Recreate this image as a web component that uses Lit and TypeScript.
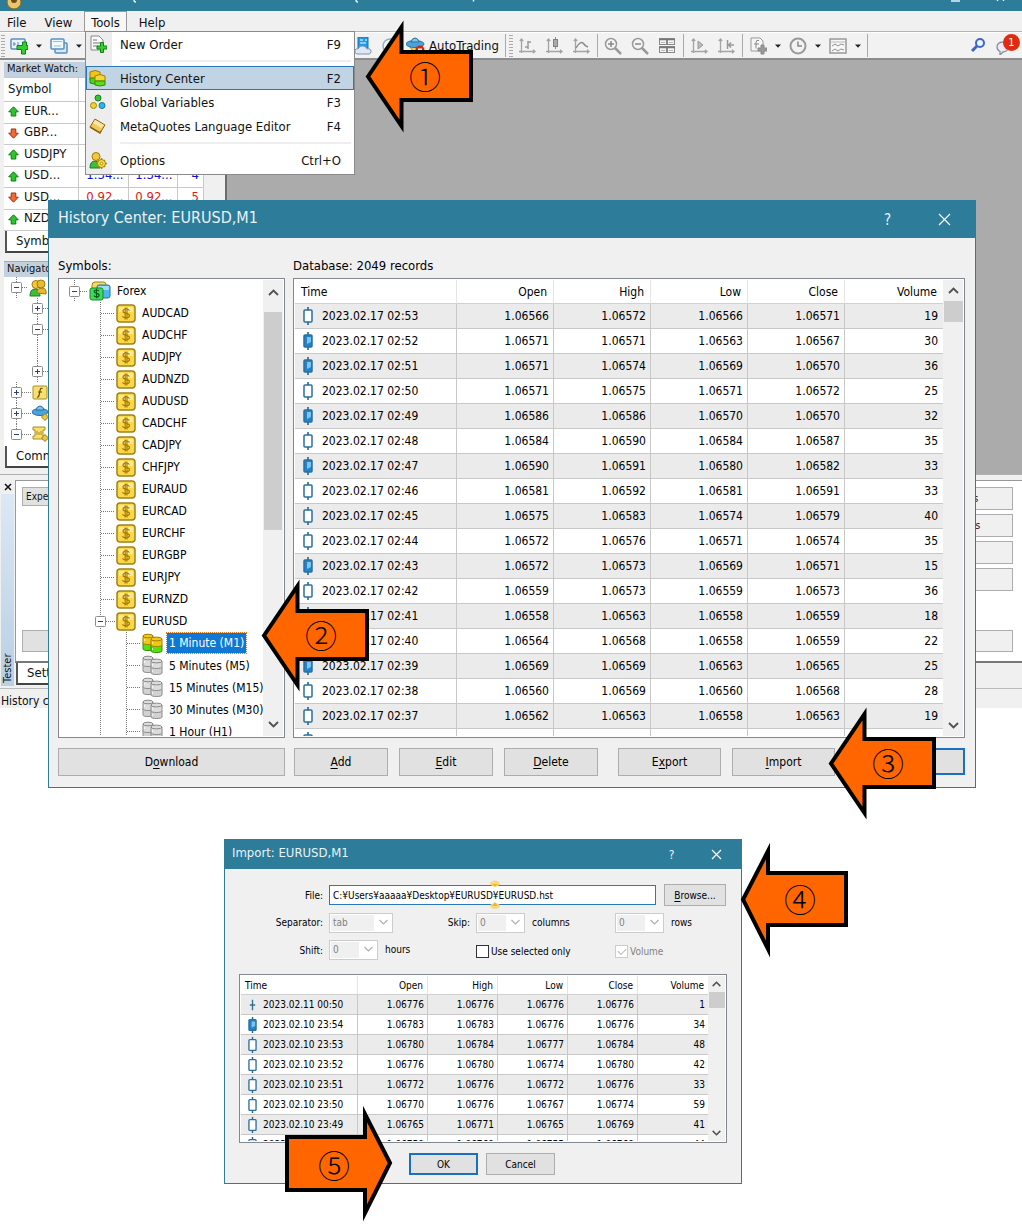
import { LitElement, html, svg, css, nothing } from "lit";
import { customElement, property } from "lit/decorators.js";
import { classMap } from "lit/directives/class-map.js";

type Bar = { time: string; kind: "up" | "down" | "flat"; cells: string[] };

const bar = (time: string, kind: Bar["kind"], values: string): Bar => ({ time, kind, cells: values.split(" ") });

const HISTORY: Bar[] = [
  bar("2023.02.17 02:53", "up", "1.06566 1.06572 1.06566 1.06571 19"),
  bar("2023.02.17 02:52", "down", "1.06571 1.06571 1.06563 1.06567 30"),
  bar("2023.02.17 02:51", "down", "1.06571 1.06574 1.06569 1.06570 36"),
  bar("2023.02.17 02:50", "up", "1.06571 1.06575 1.06571 1.06572 25"),
  bar("2023.02.17 02:49", "down", "1.06586 1.06586 1.06570 1.06570 32"),
  bar("2023.02.17 02:48", "up", "1.06584 1.06590 1.06584 1.06587 35"),
  bar("2023.02.17 02:47", "down", "1.06590 1.06591 1.06580 1.06582 33"),
  bar("2023.02.17 02:46", "up", "1.06581 1.06592 1.06581 1.06591 33"),
  bar("2023.02.17 02:45", "up", "1.06575 1.06583 1.06574 1.06579 40"),
  bar("2023.02.17 02:44", "up", "1.06572 1.06576 1.06571 1.06574 35"),
  bar("2023.02.17 02:43", "down", "1.06572 1.06573 1.06569 1.06571 15"),
  bar("2023.02.17 02:42", "up", "1.06559 1.06573 1.06559 1.06573 36"),
  bar("2023.02.17 02:41", "up", "1.06558 1.06563 1.06558 1.06559 18"),
  bar("2023.02.17 02:40", "down", "1.06564 1.06568 1.06558 1.06559 22"),
  bar("2023.02.17 02:39", "down", "1.06569 1.06569 1.06563 1.06565 25"),
  bar("2023.02.17 02:38", "up", "1.06560 1.06569 1.06560 1.06568 28"),
  bar("2023.02.17 02:37", "up", "1.06562 1.06563 1.06558 1.06563 19"),
  bar("", "up", "    "),
];

const PREVIEW: Bar[] = [
  bar("2023.02.11 00:50", "flat", "1.06776 1.06776 1.06776 1.06776 1"),
  bar("2023.02.10 23:54", "down", "1.06783 1.06783 1.06776 1.06776 34"),
  bar("2023.02.10 23:53", "up", "1.06780 1.06784 1.06777 1.06784 48"),
  bar("2023.02.10 23:52", "up", "1.06776 1.06780 1.06774 1.06780 42"),
  bar("2023.02.10 23:51", "up", "1.06772 1.06776 1.06772 1.06776 33"),
  bar("2023.02.10 23:50", "up", "1.06770 1.06776 1.06767 1.06774 59"),
  bar("2023.02.10 23:49", "up", "1.06765 1.06771 1.06765 1.06769 41"),
  bar("2023.02.10 23:48", "up", "1.06759 1.06769 1.06755 1.06769 44"),
];

const SYMBOLS = [
  "AUDCAD", "AUDCHF", "AUDJPY", "AUDNZD", "AUDUSD", "CADCHF", "CADJPY", "CHFJPY",
  "EURAUD", "EURCAD", "EURCHF", "EURGBP", "EURJPY", "EURNZD", "EURUSD",
];
const FRAMES = ["1 Minute (M1)", "5 Minutes (M5)", "15 Minutes (M15)", "30 Minutes (M30)", "1 Hour (H1)"];

const icon = (w: number, h: number, body: unknown) =>
  html`<svg width=${w} height=${h} viewBox="0 0 ${w} ${h}" aria-hidden="true">${body}</svg>`;

const cylinders = (top: string, topEdge: string, low: string, lowEdge: string) =>
  icon(21, 20, svg`
    <g stroke-width="1">
      <path d="M1 9v7c0 2 10 2 10 0V9z" fill=${low} stroke=${lowEdge}/>
      <path d="M1 3v7c0 2 10 2 10 0V3z" fill=${top} stroke=${topEdge}/>
      <ellipse cx="6" cy="3" rx="5" ry="1.8" fill=${top} stroke=${topEdge}/>
      <path d="M9 12v6c0 2 11 2 11 0v-6z" fill=${low} stroke=${lowEdge}/>
      <path d="M9 6v6c0 2 11 2 11 0V6z" fill=${top} stroke=${topEdge}/>
      <ellipse cx="14.500" cy="6" rx="5.500" ry="1.900" fill=${top} stroke=${topEdge}/>
      <path d="M10.500 9v2M10.500 15v2M2.500 6v2" stroke="#fff" opacity=".7"/>
    </g>`);
const goldCylinders = () => cylinders("#f2c811", "#a57c00", "#55e010", "#2b9000");
const grayCylinders = () => cylinders("#dcdcdc", "#8a8a8a", "#d2d2d2", "#8a8a8a");

const dollar = () => icon(20, 19, svg`
  <rect x="1" y="1" width="18" height="17" rx="3" fill="#fbd84a" stroke="#a08218" stroke-width="1.500"/>
  <path d="M3 4q0-1 1-1h12q1 0 1 1v4H3z" fill="#fdea92"/>
  <path d="M13.500 6.500q-1-1.300-3.500-1.300-3 0-3 2 0 1.700 3 2.100 3.500.5 3.500 2.300 0 2.200-3.500 2.200-2.600 0-3.600-1.500M9.200 3.500v12M11 3.500v12" fill="none" stroke="#a87c08" stroke-width="1.200"/>`);

const forexIcon = () => icon(22, 20, svg`
  <path d="M3 4q0-3 3-3h9q2 0 2 3v8H3z" fill="#f8dc58" stroke="#a08218"/>
  <rect x="8" y="4" width="13" height="13" rx="2" fill="#52b4ec" stroke="#2377a8"/>
  <rect x="9" y="5" width="11" height="4" fill="#9fdcf8"/>
  <rect x="1" y="7" width="13" height="12" rx="2" fill="#3fdc5c" stroke="#138a2b"/>
  <path d="M10 10q-.8-1-2.600-1-2.200 0-2.200 1.600 0 1.400 2.300 1.800 2.600.4 2.600 1.800 0 1.700-2.600 1.700-1.900 0-2.700-1.200M7.500 7.800v9.400" fill="none" stroke="#0a5c1c" stroke-width="1.200"/>`);

const candle = (kind: Bar["kind"]) =>
  kind === "flat"
    ? icon(12, 18, svg`<path d="M6 3v12M3 9h6" stroke="#2f6f93" stroke-width="1.500"/>`)
    : icon(12, 18, svg`
      <path d="M6 0v18" stroke="#1f6796" stroke-width="1.600"/>
      <rect x="2" y="3" width="8" height="12" rx="1" fill=${kind === "down" ? "#2283cc" : "#fff"} stroke="#2b6f9a" stroke-width="1.500"/>
      ${kind === "down" ? svg`<path d="M5 5h4v5l-4 2z" fill="#7cc4f0"/>` : nothing}`);

const chevron = (dir: "up" | "down") => icon(13, 9, svg`
  <path d=${dir === "up" ? "M2 7l4.500-4.500L11 7" : "M2 2l4.500 4.500L11 2"} fill="none" stroke="#505050" stroke-width="1.800"/>`);

const closeGlyph = (s: number) => icon(s, s, svg`<path d="M1 1L${s - 1} ${s - 1}M${s - 1} 1L1 ${s - 1}" stroke="#fff" stroke-width="1.200"/>`);

const arrowMark = (up: boolean) => icon(11, 11, svg`
  <path d=${up ? "M5.500 .8L10.300 5.800H7.800V10H3.200V5.800H.7z" : "M5.500 10.200L.7 5.200H3.200V1H7.800V5.200H10.300z"}
    fill=${up ? "#2fc22f" : "#ee6a38"} stroke=${up ? "#107a10" : "#a8300c"}/>`);

const guide = (w: number, opts: { v?: boolean; h?: boolean; box?: string; half?: boolean }, H = 22) => {
  const m = Math.floor(H / 2);
  return icon(w, H, svg`
    ${opts.v ? svg`<path d="M${opts.box ? 6.5 : 0.5} 0V${opts.half ? m : H}" stroke="#777" stroke-dasharray="1 1"/>` : nothing}
    ${opts.h ? svg`<path d="M${opts.box ? 12 : 1} ${m + 0.5}H${w - 1}" stroke="#777" stroke-dasharray="1 1"/>` : nothing}
    ${opts.box ? svg`
      <rect x="1.500" y=${m - 4.5} width="10" height="10" rx="1" fill="#fff" stroke="#8c8c8c"/>
      <path d="M4 ${m + 0.5}h5${opts.box === "+" ? `M6.500 ${m - 2}v5` : ""}" stroke="#2c3f78"/>` : nothing}`);
};

const BASE = css`
  * { box-sizing: border-box; }
  svg { display: block; flex: none; }
  button { font: inherit; color: inherit; margin: 0; padding: 0; }
  u { text-underline-offset: 2px; }
`;

@customElement("bar-table")
export class BarTable extends LitElement {
  static styles = [BASE, css`
    :host { display: flex; min-width: 0; background: #fff; border: 1px solid #828790; padding: 1px; overflow: hidden; font-size: 12px; }
    .view { flex: 1; min-width: 0; overflow: hidden; }
    table { width: 100%; table-layout: fixed; border-collapse: separate; border-spacing: 0; }
    .time { width: 162px; }
    .price { width: 97px; }
    th { height: 24px; padding: 0 6px; font-weight: 400; text-align: right; border-right: 1px solid #e4e4e4; border-bottom: 1px solid #d0d0d0; }
    th:first-child { text-align: left; }
    td { height: 25px; padding: 0 4px; text-align: right; border-right: 1px solid #c8c8c8; border-bottom: 1px solid #c8c8c8; white-space: nowrap; line-height: 18px; }
    td:last-child { padding-right: 5px; border-right: 0; }
    th:last-child { border-right: 0; }
    tbody tr:nth-child(odd) { background: #ebebeb; }
    .stamp { display: flex; align-items: center; gap: 8px; padding-left: 3px; height: 18px; }
    .scroll { flex: none; width: 20px; background: #f0f0f0; display: flex; flex-direction: column; align-items: center; }
    .end { height: 21px; display: grid; place-items: center; }
    .thumb { width: 19px; height: 21px; background: #cdcdcd; }
    .rest { flex: 1; }
    :host([compact]) { font-size: 10px; }
    :host([compact]) .time { width: 117px; }
    :host([compact]) .price { width: 70px; }
    :host([compact]) th { height: 19px; padding: 0 4px; }
    :host([compact]) td { height: 20px; padding: 0 3px; }
    :host([compact]) .stamp { gap: 5px; }
    :host([compact]) .stamp svg { width: 11px; height: 16px; }
    :host([compact]) .scroll { width: 17px; }
    :host([compact]) .end { height: 16px; }
    :host([compact]) .end svg { width: 11px; height: 8px; }
    :host([compact]) .thumb { width: 16px; height: 16px; }
  `];
  @property({ attribute: false }) rows: Bar[] = [];
  render() {
    return html`
      <div class="view">
        <table>
          <colgroup><col class="time"><col class="price"><col class="price"><col class="price"><col class="price"><col></colgroup>
          <thead><tr>${["Time", "Open", "High", "Low", "Close", "Volume"].map((h) => html`<th scope="col">${h}</th>`)}</tr></thead>
          <tbody>
            ${this.rows.map((r) => html`<tr>
              <td><div class="stamp">${candle(r.kind)}<span>${r.time}</span></div></td>
              ${r.cells.map((c) => html`<td>${c}</td>`)}
            </tr>`)}
          </tbody>
        </table>
      </div>
      <div class="scroll">
        <div class="end">${chevron("up")}</div><div class="thumb"></div><div class="rest"></div><div class="end">${chevron("down")}</div>
      </div>`;
  }
}

@customElement("step-arrow")
export class StepArrow extends LitElement {
  static styles = [BASE, css`
    :host { display: grid; width: 108px; }
    svg, .num { grid-area: 1 / 1; }
    .num { place-self: center; padding: 0 0 4px 12px; font: 300 32px/40px "Noto Sans CJK JP", sans-serif; color: #000; }
    :host([shape="right"]) .num { padding: 0 10px 0 0; }
  `];
  @property({ reflect: true }) shape = "left";
  @property() label = "";
  render() {
    const shapes: Record<string, [number, string]> = {
      left: [114, "3,56.5 36.5,7 36.5,32 106,32 106,80 36.5,80 36.5,106"],
      wide: [116, "3,57.5 28,9 28,31 106,31 106,83 28,83 28,107"],
      right: [119, "105,59 80,10 80,33 2,33 2,86 80,86 80,109"],
    };
    const [h, pts] = shapes[this.shape];
    return html`${icon(108, h, svg`<polygon points=${pts} fill="#ff6600" stroke="#000" stroke-width="4" stroke-miterlimit="8"/>`)}
      <span class="num">${this.label}</span>`;
  }
}

@customElement("trading-window")
export class TradingWindow extends LitElement {
  static styles = [BASE, css`
    :host { display: flex; flex-direction: column; background: #f0f0f0; font-size: 13px; position: relative; }
    .title { height: 11px; background: #2d7c99; overflow: hidden; }
    .title svg { width: 100%; }
    .menubar { display: flex; height: 21px; border-bottom: 1px solid #b4b4b4; }
    .menubar button { border: 1px solid transparent; border-bottom: 0; background: none; padding: 0 7px 0 6px; height: 21px; line-height: 17px; margin-right: 3px; }
    .menubar .open { background: #f7f7f7; border-color: #9a9a9a; padding: 0 6px; }
    .menubar .help { margin-left: 2px; }
    .menubar .view { margin-right: 4px; }
    .tools { display: flex; align-items: center; height: 28px; border-top: 1px solid #fff; border-bottom: 2px solid #8c8c8c; background: #f2f2f2; }
    .tool { border: 0; background: none; width: 27px; height: 24px; display: flex; justify-content: center; align-items: center; flex: none; }
    .mid { width: 26px; }
    .drop { width: 14px; }
    .auto { width: auto; gap: 4px; padding: 0 4px 0 3px; white-space: nowrap; }
    .grip { width: 4px; height: 22px; margin: 0 1px; flex: none; background: repeating-linear-gradient(#aaa 0 1px, transparent 1px 3px); }
    .sep { width: 5px; flex: none; height: 23px; background: linear-gradient(#aaa, #aaa) 2px 0 / 1px 100% no-repeat; }
    .covered { width: 263px; flex: none; }
    .grow { flex: 1; }
    .alerts { width: 31px; position: relative; justify-content: flex-start; }
    .badge { position: absolute; right: 2px; top: 0; width: 17px; height: 17px; border-radius: 9px; background: #dd2c12; color: #fff; font-size: 11px; line-height: 17px; }
    .work { display: flex; }
    .side { width: 227px; flex: none; border-right: 2px solid #6c6c6c; padding: 2px 3px 6px 4px; }
    .space { flex: 1; background: #ababab; }
    .cap { height: 15px; background: #c3d0de; font-size: 11px; line-height: 14px; padding-left: 3px; white-space: nowrap; overflow: hidden; }
    .quotes { width: 200px; height: 154px; border-collapse: collapse; table-layout: fixed; background: #fff; line-height: 15px; }
    .quotes th { text-align: left; font-weight: 400; height: 24px; padding: 0 4px 3px; border: 1px solid #c9c9c9; border-left: 0; }
    .quotes td { padding: 0 4px 4px; border: 1px solid #c9c9c9; border-left: 0; text-align: right; white-space: nowrap; overflow: hidden; }
    .quotes tr td:first-child { text-align: left; }
    .name { display: flex; align-items: center; gap: 5px; }
    .name svg { margin-top: 3px; }
    .c1 { width: 74px; } .c2 { width: 50px; } .c3 { width: 49px; }
    .bid { color: #1010d8; } .ask { color: #e01818; }
    .tab { height: 22px; margin-left: 1px; padding-left: 9px; border-left: 2px solid #555; border-bottom: 2px solid #444; background: #fff; line-height: 20px; width: 80px; }
    .cap.second { margin-top: 8px; border-top: 1px solid #aaa; height: 16px; }
    .nav { background: #fff; display: flex; flex-direction: column; height: 169px; overflow: hidden; }
    .row { display: flex; align-items: center; height: 21px; padding-left: 6px; }
    .sub { padding-left: 27px; }
    .deep { padding-left: 33px; }
    .tester { display: flex; border-top: 1px solid #b0b0b0; height: 214px; padding-top: 5px; }
    .strip { width: 15px; flex: none; display: flex; flex-direction: column; align-items: center; font-size: 11px; }
    .strip button { border: 0; background: none; height: 14px; line-height: 12px; }
    .vert { flex: 1; width: 13px; background: linear-gradient(#b9cfe4, #dbe8f6); writing-mode: vertical-rl; transform: rotate(180deg); line-height: 13px; padding-top: 3px; font-size: 11px; margin-bottom: 2px; }
    .panel { flex: 1; display: flex; flex-direction: column; min-width: 0; }
    .fields { display: flex; justify-content: space-between; height: 183px; border-top: 1px solid #999; border-left: 1px solid #999; border-bottom: 2px solid #777; background: #fff; padding: 6px 9px 9px 6px; font-size: 10px; }
    .col { display: flex; flex-direction: column; gap: 4px; width: 144px; }
    .col button { border: 1px solid #adadad; background: #f0f0f0; height: 23px; flex: none; padding-right: 4px; }
    .col .last { margin-top: auto; height: 22px; }
    .left button { text-align: left; padding-left: 3px; height: 19px; background: #e1e1e1; }
    .status { height: 20px; border-top: 1px solid #bbb; padding-left: 1px; line-height: 24px; font-size: 12px; overflow: hidden; }
    .menu { position: absolute; left: 85px; top: 31px; width: 270px; border: 1px solid #8a8a8a; background: linear-gradient(90deg, #ededed 26px, #fff 26px); padding-bottom: 2px; }
    .item { display: flex; align-items: center; width: 100%; height: 24px; border: 1px solid transparent; background: none; padding: 0 12px 0 2px; text-align: left; }
    .item.hot { background: #c1d4e4; border-color: #2a78b8; }
    .glyph { width: 31px; }
    .item .txt { flex: 1; }
    hr { margin: 4px 3px 4px 34px; border: 0; height: 2px; background: #eee; }
  `];

  private item(text: string, key: string, glyph: unknown, hot = false) {
    return html`<button class=${classMap({ item: true, hot })}><span class="glyph">${glyph}</span><span class="txt">${text}</span><span>${key}</span></button>`;
  }
  private tool(label: string, body: unknown, cls = "") {
    return html`<button class="tool ${cls}" aria-label=${label}>${icon(18, 18, body)}</button>`;
  }
  private drop(label: string) {
    return html`<button class="tool drop" aria-label=${label}>${icon(6, 4, svg`<path d="M0 .5h6L3 3.800z" fill="#222"/>`)}</button>`;
  }

  render() {
    const axes = svg`<path d="M3.500 2v14M1 14.500h16M1.800 4l1.700-2 1.700 2M15 12.800l2 1.700-2 1.700" fill="none" stroke="#a4a4a4" stroke-width="1.300"/>`;
    const person = svg`<path d="M1 17q0-7 5-7t5 7z" fill="#3bbf3b" stroke="#1d7a1d"/><circle cx="7" cy="5.500" r="4" fill="#f3c93b" stroke="#a07810"/>`;
    const quotes: [boolean, string, string, string, string][] = [
      [true, "EUR...", "", "", ""], [false, "GBP...", "", "", ""], [true, "USDJPY", "", "", ""],
      [true, "USD...", "1.34...", "4", "bid"], [false, "USD...", "0.92...", "5", "ask"], [true, "NZD...", "", "", ""],
    ];
    return html`
      <div class="title"><svg width="100%" height="11">
        <circle cx="14" cy="2" r="7" fill="#e8c56a" stroke="#8a6416"/><circle cx="14" cy="0" r="3" fill="#6b4a18"/>
        <path d="M134 0q0 2 2 2M356 0q0 2 2 2M473.500 0v1.500M951 1h9M997.500 0v1M1003.500 0v1" fill="none" stroke="#e6f1f5" stroke-width="1.500"/>
      </svg></div>
      <nav class="menubar"><button>File</button><button class="view">View</button><button class="open">Tools</button><button class="help">Help</button></nav>
      <div class="tools">
        <span class="grip"></span>
        ${this.tool("New chart", svg`<rect x="1" y="2" width="14" height="10" rx="1" fill="#eaf4fc" stroke="#5b8fbd" stroke-width="1.500"/><path d="M4 5v4M3 7h3M8 5v3" stroke="#5b8fbd"/><path d="M9 8.500h3.500V5h4v3.500H18v4h-2.500V17h-4v-4.500H7v-4z" fill="#35cc35" stroke="#128012"/>`, "mid")}
        ${this.drop("New chart list")}
        ${this.tool("Profiles", svg`<rect x="5" y="6" width="12" height="10" rx="1" fill="#d5e8f8" stroke="#5b8fbd" stroke-width="1.500"/><rect x="1" y="2" width="13" height="10" rx="1" fill="#f1f8fd" stroke="#5b8fbd" stroke-width="1.500"/><path d="M3 4.500h9M4 9h7" stroke="#9dbfdd"/>`, "mid")}
        ${this.drop("Profile list")}
        <span class="covered"></span>
        ${this.tool("Virtual hosting", svg`<rect x="4" y="0" width="10" height="11" fill="#1f9be8" stroke="#1672b5"/><path d="M6 3h3M11 3h2M6 6h6" stroke="#fff"/><path d="M3 17q-3-1-2-4 1-2 3-1 2-4 5-3 3 0 4 3 4-1 4 2.500 0 2-2 2.500z" fill="#dfe7f2" stroke="#7d93ad"/>`)}
        ${this.tool("Signals", svg`<circle cx="9" cy="9" r="7" fill="none" stroke="#8fb0c8" stroke-width="1.500"/><circle cx="9" cy="9" r="3" fill="#6aa6cf"/>`)}
        <button class="tool auto">${icon(19, 18, svg`<path d="M3 9l6 7 8-2-1-6z" fill="#f4cf45" stroke="#a88416"/><ellipse cx="9" cy="7" rx="9" ry="3.500" fill="#4aa3dc" stroke="#2a6f9e"/><path d="M5 5q1-4 4-4t4 4z" fill="#7cc6ee" stroke="#2a6f9e"/><circle cx="14" cy="13" r="4.500" fill="#d8260e"/><rect x="12" y="11.500" width="4" height="3" fill="#fff"/>`)}<span>AutoTrading</span></button>
        <span class="sep"></span><span class="grip"></span>
        ${this.tool("Bar chart", svg`${axes}<path d="M10 4v8M10 5h3M7 10h3" stroke="#9a9a9a" stroke-width="1.500"/>`)}
        ${this.tool("Candlesticks", svg`${axes}<path d="M10.500 0v12" stroke="#8a8a8a"/><rect x="8.500" y="2.500" width="4" height="7" fill="#aaa" stroke="#808080"/>`)}
        ${this.tool("Line chart", svg`${axes}<path d="M4 11q4-7 7-5 2 3 5 4" fill="none" stroke="#8a8a8a" stroke-width="1.500"/>`)}
        <span class="sep"></span>
        ${this.tool("Zoom in", svg`<circle cx="7" cy="7" r="5.500" fill="#f4f4f4" stroke="#999" stroke-width="1.500"/><path d="M4 7h6M7 4v6" stroke="#888" stroke-width="1.500"/><path d="M11 11l6 6" stroke="#999" stroke-width="2.500"/>`)}
        ${this.tool("Zoom out", svg`<circle cx="7" cy="7" r="5.500" fill="#f4f4f4" stroke="#999" stroke-width="1.500"/><path d="M4 7h6" stroke="#888" stroke-width="1.500"/><path d="M11 11l6 6" stroke="#999" stroke-width="2.500"/>`)}
        ${this.tool("Tile windows", svg`<g fill="#f4f4f4" stroke="#888"><rect x="1.500" y="1.500" width="7" height="6"/><rect x="9.500" y="1.500" width="7" height="6"/><rect x="1.500" y="9.500" width="7" height="6"/><rect x="9.500" y="9.500" width="7" height="6"/></g><path d="M1 2.500h16M1 10.500h16" stroke="#777" stroke-width="1.500"/><path d="M3 5.500h4M11 5.500h4M3 13.500h4M11 13.500h4" stroke="#bbb"/>`)}
        <span class="sep"></span>
        ${this.tool("Auto scroll", svg`${axes}<path d="M8 4l5 4-5 4z" fill="#bbb" stroke="#999"/>`)}
        ${this.tool("Chart shift", svg`${axes}<path d="M10.500 3v9M17 8h-5M14 5.500L11.500 8 14 10.500" fill="none" stroke="#999" stroke-width="1.500"/>`)}
        <span class="sep"></span>
        ${this.tool("Indicators", svg`<path d="M2 1h9l3 3v10H2z" fill="#f6f6f6" stroke="#999"/><path d="M10 3.500q-3-1-3 2v6M5 7h5" fill="none" stroke="#888"/><path d="M9 11h3V8h3v3h3v3h-3v3h-3v-3H9z" fill="#9a9a9a" stroke="#888"/>`, "mid")}
        ${this.drop("Indicator list")}
        ${this.tool("Periods", svg`<circle cx="9" cy="9" r="7.500" fill="#f2f2f2" stroke="#999" stroke-width="2"/><path d="M9 4.500V9h4" fill="none" stroke="#888" stroke-width="1.500"/>`, "mid")}
        ${this.drop("Period list")}
        ${this.tool("Templates", svg`<rect x="1" y="2" width="16" height="14" fill="#f7f7f7" stroke="#999" stroke-width="1.500"/><path d="M2 5h14" stroke="#bbb"/><path d="M3 9l3-2 3 2 3-2 3 1M3 14l3-2 3 2 3-2 3 1" fill="none" stroke="#909090"/>`, "mid")}
        ${this.drop("Template list")}
        <span class="sep"></span><span class="grow"></span>
        ${this.tool("Search", svg`<circle cx="11" cy="6" r="4" fill="#eef3fb" stroke="#3f66c4" stroke-width="2"/><path d="M8 9l-5 5" stroke="#3f66c4" stroke-width="3"/>`)}
        <button class="tool alerts" aria-label="Notifications">${icon(18, 18, svg`<path d="M6 10q0-5 7-5t5 5-6 5l-3 3v-3.500Q6 13 6 10z" fill="#eceaf3" stroke="#8f8f9f" stroke-width="1.300"/>`)}<span class="badge">1</span></button>
      </div>
      <div class="work">
        <aside class="side">
          <div class="cap">Market Watch:</div>
          <table class="quotes">
            <colgroup><col class="c1"><col class="c2"><col class="c3"><col></colgroup>
            <thead><tr><th scope="col">Symbol</th><th></th><th></th><th></th></tr></thead>
            <tbody>${quotes.map(([up, name, price, spread, tone]) => html`<tr>
              <td><span class="name">${arrowMark(up)}${name}</span></td>
              <td class=${tone}>${price}</td><td class=${tone}>${price}</td><td class=${tone}>${spread}</td></tr>`)}</tbody>
          </table>
          <div class="tab">Symbols</div>
          <div class="cap second">Navigator</div>
          <div class="nav">
            <div class="row">${guide(19, { v: true, h: true, box: "-" }, 21)}${icon(18, 18, svg`${person}<path d="M8 14q0-5 5-5t4 6z" fill="#e5b92c" stroke="#a07810"/><circle cx="12" cy="5" r="4" fill="#e8bb35" stroke="#a07810"/>`)}</div>
            <div class="row sub">${guide(19, { v: true, h: true, box: "+" }, 21)}</div>
            <div class="row sub">${guide(19, { v: true, h: true, box: "-" }, 21)}</div>
            <div class="row deep">${guide(19, { v: true }, 21)}</div>
            <div class="row sub">${guide(19, { v: true, h: true, box: "+" }, 21)}</div>
            <div class="row">${guide(22, { v: true, h: true, box: "+" }, 21)}${icon(16, 16, svg`<rect x="1" y="1" width="14" height="13" rx="1" fill="#f9df6c" stroke="#a88c28"/><path d="M10.500 3.500q-2-1-2.500 2l-1 5q-.5 2-2 1.500M6 7h4" fill="none" stroke="#5c4c10" stroke-width="1.200"/>`)}</div>
            <div class="row">${guide(22, { v: true, h: true, box: "+" }, 21)}${icon(18, 17, svg`<ellipse cx="8" cy="7" rx="8" ry="3.500" fill="#4aa3dc" stroke="#2a6f9e"/><path d="M4 5q1-4 4-4t4 4z" fill="#7cc6ee" stroke="#2a6f9e"/><path d="M13 8.500l3.500 3.500-3.500 3.500L9.500 12z" fill="#f0c63c" stroke="#9a7a18"/>`)}</div>
            <div class="row">${guide(22, { v: true, h: true, box: "-" , half: true }, 21)}${icon(18, 17, svg`<path d="M1 1h12v3h-2v6h2v3H1v-3h2V4H1z" fill="#f9df6c" stroke="#a88c28"/><path d="M5 5v4M7 6v3M9 5v4" stroke="#a88c28"/><path d="M13 8.500l3.500 3.500-3.500 3.500L9.500 12z" fill="#f0c63c" stroke="#9a7a18"/>`)}</div>
          </div>
          <div class="tab">Common</div>
        </aside>
        <div class="space"></div>
      </div>
      <div class="tester">
        <div class="strip"><button aria-label="Close tester">${icon(8, 8, svg`<path d="M1 1l6 6M7 1L1 7" stroke="#111" stroke-width="1.500"/>`)}</button><div class="vert">Tester</div></div>
        <div class="panel">
          <div class="fields">
            <div class="col left"><button>Expert Advisor</button><button class="last" aria-label="Tester mode"></button></div>
            <div class="col"><button>Expert properties</button><button>Symbol properties</button><button aria-label="Chart"></button><button aria-label="Modify"></button><button class="last" aria-label="Run"></button></div>
          </div>
          <div class="tab">Settings</div>
        </div>
      </div>
      <div class="status">History center</div>
      <div class="menu">
        ${this.item("New Order", "F9", icon(18, 18, svg`<path d="M2 1h8l4 4v10H2z" fill="#fafafa" stroke="#8a8a8a"/><path d="M4 5h4M4 8h7M4 11h5" stroke="#777"/><path d="M8 11h3.500V7.500h3V11H18v3h-3.500v3.500h-3V14H8z" fill="#35cc35" stroke="#128012"/>`))}
        <hr>
        ${this.item("History Center", "F2", icon(18, 18, svg`<path d="M1 3q5-3 10 0v8H1z" fill="#f0c419" stroke="#a57c00"/><path d="M1 9h9v5q-5 2-9 0z" fill="#4fd31a" stroke="#2b9000"/><path d="M6 7q5-3 10 0v5H6z" fill="#f7d535" stroke="#a57c00"/><path d="M6 12h10v4q-5 2-10 0z" fill="#58dd1d" stroke="#2b9000"/>`), true)}
        ${this.item("Global Variables", "F3", icon(18, 18, svg`<circle cx="9" cy="5" r="3" fill="#36c436" stroke="#1c7d1c"/><circle cx="4.500" cy="12.500" r="3" fill="#efd52c" stroke="#9c8610"/><circle cx="13" cy="12.500" r="3" fill="#2eb6e8" stroke="#13749b"/>`))}
        ${this.item("MetaQuotes Language Editor", "F4", icon(18, 18, svg`<path d="M6 2l10 6-5 8-10-6z" fill="#f0c95a" stroke="#8c6412"/><path d="M6 3l9 5-3 3-8-5z" fill="#fbe6a4"/><path d="M1 10l10 6 1-2" fill="none" stroke="#8c6412" stroke-width="1.500"/>`))}
        <hr>
        ${this.item("Options", "Ctrl+O", icon(18, 18, svg`${person}<circle cx="12.500" cy="12.500" r="4" fill="#f5dc3e" stroke="#a88c10"/><path d="M12.500 7v2M12.500 16v2M7 12.500h2M16 12.500h2M9 9l1 1M15 15l1 1M16 9l-1 1M9 16l1-1" stroke="#a88c10" stroke-width="1.500"/><circle cx="12.500" cy="12.500" r="1.300" fill="#fff" stroke="#a88c10"/>`))}
      </div>`;
  }
}

@customElement("app-root")
export class AppRoot extends LitElement {
  static styles = [BASE, css`
    :host { display: block; position: relative; min-height: 100vh; background: #fff; color: #111; overflow: hidden;
      font-family: "DejaVu Sans Condensed", "DejaVu Sans", Verdana, sans-serif; font-size: 12px; }
    .dialog { position: absolute; display: flex; flex-direction: column; background: #f0f0f0; border: 1px solid #2d7c99; color: #000; }
    .bar { display: flex; align-items: center; background: #2d7c99; color: #e9f3f7; }
    .bar h2 { flex: 1; margin: 0; font-weight: 400; }
    .bar button { border: 0; background: none; display: grid; place-items: center; }
    .history { left: 48px; right: 46px; top: 200px; }
    .history .bar { height: 37px; padding: 0 2px 0 9px; }
    .history h2 { font-size: 16px; line-height: 34px; align-self: start; }
    .history .bar button { width: 57px; height: 36px; font-size: 15px; }
    .body { display: grid; grid-template-columns: 227px minmax(0, 1fr); column-gap: 8px; grid-template-rows: 22px 460px 38px; padding: 18px 10px 11px 9px; }
    .body > .cap { font-size: 13px; line-height: 19px; }
    .tree { display: flex; background: #fff; border: 1px solid #828790; padding: 1px; overflow: hidden; }
    .nodes { flex: 1; min-width: 0; overflow: hidden; }
    .node { display: flex; align-items: center; height: 22px; padding-left: 8px; white-space: nowrap; }
    .node .txt { margin-left: 6px; line-height: 18px; }
    .node.sym { padding-left: 40px; }
    .node.opened { padding-left: 34px; }
    .node.frame { padding-left: 40px; }
    .node.frame .txt { margin-left: 4px; padding: 1px 2px 0; }
    .node .chosen { background: #0e78d4; color: #fff; outline: 1px dotted #d87a28; height: 20px; }
    .scroll { flex: none; width: 20px; background: #f0f0f0; display: flex; flex-direction: column; align-items: center; }
    .end { height: 24px; display: grid; place-items: center; }
    .thumb { width: 18px; height: 218px; background: #cdcdcd; margin-top: 8px; }
    .rest { flex: 1; }
    .push { border: 1px solid #adadad; background: #e1e1e1; text-align: center; font-size: 12px; }
    .push.main { border: 2px solid #1a6fc0; }
    .body > .push, .acts { margin-top: 10px; }
    .acts { display: flex; justify-content: space-between; padding-left: 1px; }
    .acts .push { width: 94px; }
    .acts .set { display: flex; gap: 11px; }
    .acts .io { display: flex; gap: 11px; }
    .acts .io .push { width: 103px; }
    .acts .io .push.main { height: 27px; margin-left: 16px; }

    .import { left: 224px; width: 518px; top: 839px; font-size: 10px; }
    .import .bar { height: 29px; padding: 0 2px 0 7px; }
    .import h2 { font-size: 13px; line-height: 26px; align-self: start; }
    .import .bar button { width: 45px; height: 29px; font-size: 12px; }
    .form { padding: 15px 15px 0 14px; display: grid; grid-template-columns: 84px 141px 133px minmax(0, 1fr); gap: 6px; }
    .lab { text-align: right; align-self: center; }
    .path { grid-column: 2 / 5; display: flex; gap: 8px; position: relative; }
    .path input { flex: 1; min-width: 0; border: 1px solid #2a78c0; height: 20px; margin-top: 1px; padding: 0 3px; font: inherit; background: #fff; color: #000; }
    .path .push { width: 62px; height: 22px; font-size: 10px; }
    .mark { position: absolute; left: 161px; top: -4px; }
    .f { display: flex; align-items: center; gap: 7px; height: 21px; }
    .f .lab { margin-left: auto; }
    .pick { position: relative; display: grid; align-items: center; }
    .pick select { appearance: none; font: inherit; color: #838383; opacity: 1; height: 20px; width: 49px; border: 1px solid #ccc; padding: 0 3px;
      background: linear-gradient(#f0f0f0, #f0f0f0) 1px 1px / calc(100% - 19px) calc(100% - 2px) no-repeat, #fff; grid-area: 1 / 1; }
    .pick svg { grid-area: 1 / 1; justify-self: end; margin-right: 4px; pointer-events: none; z-index: 1; }
    .pick select.long { width: 64px; }
    .check { display: flex; align-items: center; gap: 2px; height: 23px; padding-top: 2px; }
    .check input { appearance: none; margin: 0; width: 13px; height: 13px; border: 1px solid #333; background: #fff; display: grid; place-items: center; }
    .check.off { color: #838383; }
    .check.off input { border-color: #ccc; }
    .check input:checked::after { content: ""; width: 7px; height: 4px; margin-bottom: 2px; border: solid #b8b8b8; border-width: 0 0 1px 1px; transform: rotate(-45deg); }
    .import bar-table { margin: 12px 14px 10px; height: 169px; }
    .foot { display: flex; justify-content: center; gap: 8px; padding: 0 2px 8px 0; }
    .foot .push { width: 69px; height: 22px; font-size: 10px; }
    step-arrow { position: absolute; }
    .s1 { left: 365px; top: 20px; } .s2 { left: 261px; top: 579px; } .s3 { left: 828px; top: 707px; }
    .s4 { left: 740px; top: 842px; } .s5 { left: 285px; top: 1104px; }
  `];

  private pick(id: string, label: string, value: string, long = false) {
    return html`<span class="pick"><select id=${id} aria-label=${label} class=${classMap({ long })} disabled><option>${value}</option></select>
      ${icon(11, 7, svg`<path d="M1.500 1l4 4 4-4" fill="none" stroke="#b0b0b0" stroke-width="1.200"/>`)}</span>`;
  }

  render() {
    return html`
      <trading-window></trading-window>

      <section class="dialog history" role="dialog" aria-label="History Center">
        <div class="bar"><h2>History Center: EURUSD,M1</h2><button aria-label="Help">?</button><button aria-label="Close">${closeGlyph(13)}</button></div>
        <div class="body">
          <div class="cap">Symbols:</div>
          <div class="cap">Database: 2049 records</div>
          <div class="tree">
            <div class="nodes">
              <div class="node">${guide(21, { v: true, h: true, box: "-" })}${forexIcon()}<span class="txt">Forex</span></div>
              ${SYMBOLS.map((s) => s === "EURUSD"
                ? html`<div class="node opened">${guide(22, { v: true, h: true, box: "-" })}${dollar()}<span class="txt">${s}</span></div>`
                : html`<div class="node sym">${guide(16, { v: true, h: true })}${dollar()}<span class="txt">${s}</span></div>`)}
              ${FRAMES.map((f, i) => html`<div class="node frame">${guide(26, { v: true })}${guide(16, { v: true, h: true })}${i ? grayCylinders() : goldCylinders()}<span class=${classMap({ txt: true, chosen: !i })}>${f}</span></div>`)}
            </div>
            <div class="scroll"><div class="end">${chevron("up")}</div><div class="thumb"></div><div class="rest"></div><div class="end">${chevron("down")}</div></div>
          </div>
          <bar-table .rows=${HISTORY}></bar-table>
          <button class="push">D<u>o</u>wnload</button>
          <div class="acts">
            <div class="set"><button class="push"><u>A</u>dd</button><button class="push"><u>E</u>dit</button><button class="push"><u>D</u>elete</button></div>
            <div class="io"><button class="push">E<u>x</u>port</button><button class="push"><u>I</u>mport</button><button class="push main" aria-label="Close dialog"></button></div>
          </div>
        </div>
      </section>

      <section class="dialog import" role="dialog" aria-label="Import">
        <div class="bar"><h2>Import: EURUSD,M1</h2><button aria-label="Help">?</button><button aria-label="Close">${closeGlyph(11)}</button></div>
        <div class="form">
          <label class="lab" for="file">File:</label>
          <div class="path"><input id="file" value="C:¥Users¥aaaaa¥Desktop¥EURUSD¥EURUSD.hst"><button class="push"><u>B</u>rowse...</button>
            <span class="mark">${icon(10, 30, svg`<ellipse cx="5" cy="3.500" rx="5" ry="3" fill="#f5d98a"/><path d="M2 4h6L5 7z" fill="#f5b51c"/><ellipse cx="5" cy="26" rx="5" ry="3" fill="#f5d98a"/><path d="M5 22l3 4H2z" fill="#f5b51c"/>`)}</span></div>
          <label class="lab" for="sep">Separator:</label>
          <div class="f">${this.pick("sep", "Separator", "tab", true)}<label class="lab" for="skip">Skip:</label></div>
          <div class="f">${this.pick("skip", "Skip columns", "0")}<span>columns</span></div>
          <div class="f">${this.pick("rows", "Skip rows", "0")}<span>rows</span></div>
          <label class="lab" for="shift">Shift:</label>
          <div class="f">${this.pick("shift", "Shift", "0")}<span>hours</span></div>
          <label class="check"><input type="checkbox"><span>Use selected only</span></label>
          <label class="check off"><input type="checkbox" checked disabled><span>Volume</span></label>
        </div>
        <bar-table compact .rows=${PREVIEW}></bar-table>
        <div class="foot"><button class="push main">OK</button><button class="push">Cancel</button></div>
      </section>

      <step-arrow class="s1" label="①"></step-arrow>
      <step-arrow class="s2" label="②"></step-arrow>
      <step-arrow class="s3" label="③"></step-arrow>
      <step-arrow class="s4" shape="wide" label="④"></step-arrow>
      <step-arrow class="s5" shape="right" label="⑤"></step-arrow>`;
  }
}
